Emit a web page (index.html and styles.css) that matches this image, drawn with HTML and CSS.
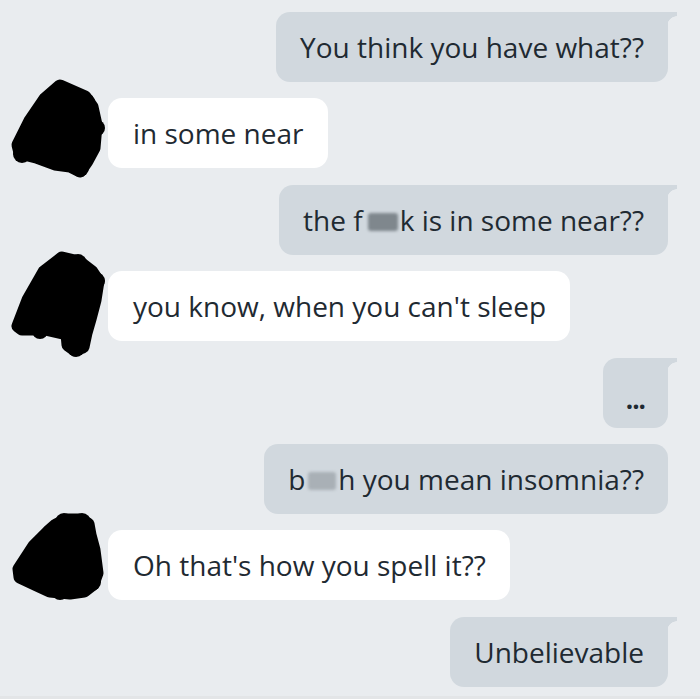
FILE: index.html
```html
<!DOCTYPE html>
<html>
<head>
<meta charset="utf-8">
<link rel="stylesheet" href="styles.css">
</head>
<body>
<div class="chat">
  <div class="msg out"><div class="bubble tail">You think you have what??</div></div>
  <div class="msg in">
    <svg class="avatar" width="108" height="70" viewBox="0 0 108 70"><polygon points="60,-12 85,-1 92,9 96,27 94,50 87,63 80,73 70,68 55,66 36,59 20,55 18,47 30,23 45,1"/><circle cx="86" cy="4" r="9"/><circle cx="97" cy="30" r="8"/><circle cx="80" cy="70" r="9"/><circle cx="22" cy="56" r="9"/></svg>
    <div class="bubble">in some near</div>
  </div>
  <div class="msg out"><div class="bubble tail">the f<span class="blur dark"></span>k is in some near??</div></div>
  <div class="msg in">
    <svg class="avatar" width="108" height="70" viewBox="0 0 108 70"><polygon points="62,-13 79,-9 92,1 98,10 95,29 90,48 86,62 83,76 75,79 68,74 67,63 45,58 22,58 18,55 28,29 44,1"/><circle cx="78" cy="-8" r="9"/><circle cx="96" cy="10" r="9"/><circle cx="76" cy="77" r="9"/><circle cx="40" cy="60" r="8"/></svg>
    <div class="bubble">you know, when you can't sleep</div>
  </div>
  <div class="msg out"><div class="bubble tail dots">...</div></div>
  <div class="msg out"><div class="bubble">b<span class="blur light"></span>h you mean insomnia??</div></div>
  <div class="msg in">
    <svg class="avatar" width="108" height="70" viewBox="0 0 108 70"><polygon points="56,-5 66,-10 80,-10 88,-6 90,5 94,20 97,43 93,54 84,61 70,63 50,61 37,55 20,47 19,39 34,16 48,2"/><circle cx="64" cy="-8" r="9"/><circle cx="82" cy="-8" r="9"/><circle cx="60" cy="62" r="8"/><circle cx="92" cy="52" r="9"/></svg>
    <div class="bubble">Oh that's how you spell it??</div>
  </div>
  <div class="msg out"><div class="bubble tail">Unbelievable</div></div>
</div>
<div class="footer"></div>
</body>
</html>
```
FILE: styles.css
```css
html, body {
  margin: 0;
  padding: 0;
}
body {
  background: #e9ecef;
  width: 700px;
  height: 699px;
  overflow: hidden;
  font-family: "Open Sans", "Noto Sans", sans-serif;
  color: #1f2a32;
  position: relative;
}
.chat {
  display: flex;
  flex-direction: column;
  gap: 16.4px;
  padding-top: 12px;
}
.msg {
  display: flex;
  align-items: center;
}
.msg.out {
  justify-content: flex-end;
  padding-right: 32px;
}
.bubble {
  position: relative;
  height: 70px;
  box-sizing: border-box;
  padding: 0 24px;
  display: flex;
  align-items: center;
  font-size: 28px;
  border-radius: 14px;
  white-space: nowrap;
}
.out .bubble {
  background: #d1d8de;
}
.in .bubble {
  background: #ffffff;
  padding-left: 25px;
}
.bubble.tail {
  border-top-right-radius: 0;
}
.bubble.tail::after {
  content: "";
  position: absolute;
  left: 100%;
  top: 0;
  width: 9px;
  height: 14px;
  background: radial-gradient(circle at 100% 100%, transparent 9.5px, #d1d8de 10px);
}
.avatar {
  overflow: visible;
  flex: none;
}
.avatar polygon, .avatar circle {
  fill: #000;
  stroke: #000;
  stroke-width: 13;
  stroke-linejoin: round;
}
.avatar circle {
  stroke-width: 0;
}
.blur {
  display: inline-block;
  height: 18px;
  border-radius: 3px;
  filter: blur(1.5px);
  margin-top: 4px;
}
.blur.dark {
  width: 30px;
  background: #7f878d;
  margin-left: 5px;
  margin-right: 2px;
}
.blur.light {
  width: 28px;
  background: #a9b0b6;
  margin-left: 3px;
  margin-right: 2px;
}
.bubble.dots {
  padding: 12px 23px 0;
  font-size: 26px;
  font-weight: bold;
  letter-spacing: -1px;
}
.footer {
  position: absolute;
  left: 0;
  right: 0;
  bottom: 0;
  height: 3px;
  background: #e3e5e7;
}
```
